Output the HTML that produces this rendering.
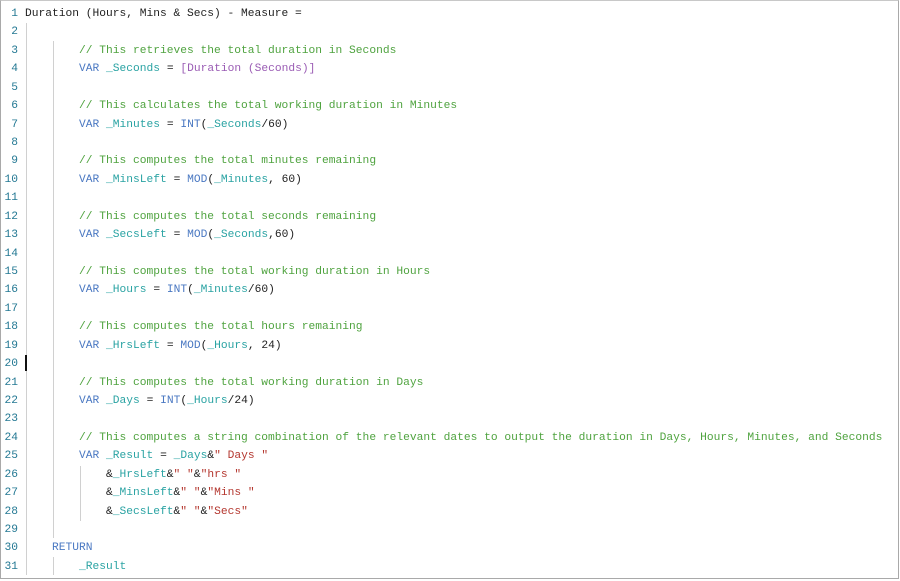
<!DOCTYPE html><html><head><style>
body{margin:0;background:#fff;width:900px;height:581px;overflow:hidden;position:relative}
.f{position:absolute;left:0;top:0;width:897px;height:577px;border:1px solid #a9a9a9;border-top-color:#c8c8c8;background:#fff}
.l{position:absolute;left:0;height:18px;line-height:18px;font-family:"Liberation Mono",monospace;font-size:11.25px;white-space:pre;color:#222}
.n{position:absolute;left:1px;width:17px;text-align:right;color:#237893}
.t{position:absolute;left:25px}
.g{position:absolute;width:1px;background:#d0d0d0}
.c{color:#4fa33f}.k{color:#4a78c2}.v{color:#2aa3a3}.m{color:#9a5cb4}.s{color:#b4372f}
</style></head><body><div class="f"></div>
<div class="g" style="left:26px;top:23px;height:552px"></div>
<div class="g" style="left:53px;top:41px;height:497px"></div>
<div class="g" style="left:53px;top:557px;height:18px"></div>
<div class="g" style="left:80px;top:466px;height:55px"></div>
<div style="position:absolute;left:25px;top:355px;width:2px;height:16px;background:#111"></div>
<div id="c"></div>
<script>
const L=[
'<span>Duration (Hours, Mins &amp; Secs) - Measure =</span>','',
'        <span class="c">// This retrieves the total duration in Seconds</span>',
'        <span class="k">VAR</span> <span class="v">_Seconds</span> = <span class="m">[Duration (Seconds)]</span>','',
'        <span class="c">// This calculates the total working duration in Minutes</span>',
'        <span class="k">VAR</span> <span class="v">_Minutes</span> = <span class="k">INT</span>(<span class="v">_Seconds</span>/60)','',
'        <span class="c">// This computes the total minutes remaining</span>',
'        <span class="k">VAR</span> <span class="v">_MinsLeft</span> = <span class="k">MOD</span>(<span class="v">_Minutes</span>, 60)','',
'        <span class="c">// This computes the total seconds remaining</span>',
'        <span class="k">VAR</span> <span class="v">_SecsLeft</span> = <span class="k">MOD</span>(<span class="v">_Seconds</span>,60)','',
'        <span class="c">// This computes the total working duration in Hours</span>',
'        <span class="k">VAR</span> <span class="v">_Hours</span> = <span class="k">INT</span>(<span class="v">_Minutes</span>/60)','',
'        <span class="c">// This computes the total hours remaining</span>',
'        <span class="k">VAR</span> <span class="v">_HrsLeft</span> = <span class="k">MOD</span>(<span class="v">_Hours</span>, 24)','',
'        <span class="c">// This computes the total working duration in Days</span>',
'        <span class="k">VAR</span> <span class="v">_Days</span> = <span class="k">INT</span>(<span class="v">_Hours</span>/24)','',
'        <span class="c">// This computes a string combination of the relevant dates to output the duration in Days, Hours, Minutes, and Seconds</span>',
'        <span class="k">VAR</span> <span class="v">_Result</span> = <span class="v">_Days</span>&amp;<span class="s">" Days "</span>',
'            &amp;<span class="v">_HrsLeft</span>&amp;<span class="s">" "</span>&amp;<span class="s">"hrs "</span>',
'            &amp;<span class="v">_MinsLeft</span>&amp;<span class="s">" "</span>&amp;<span class="s">"Mins "</span>',
'            &amp;<span class="v">_SecsLeft</span>&amp;<span class="s">" "</span>&amp;<span class="s">"Secs"</span>','',
'    <span class="k">RETURN</span>',
'        <span class="v">_Result</span>'];
let h='';L.forEach((t,i)=>{h+=`<div class="l" style="top:${5+i*18.43}px"><span class="n">${i+1}</span><span class="t">${t}</span></div>`});
document.getElementById('c').innerHTML=h;
</script></body></html>
